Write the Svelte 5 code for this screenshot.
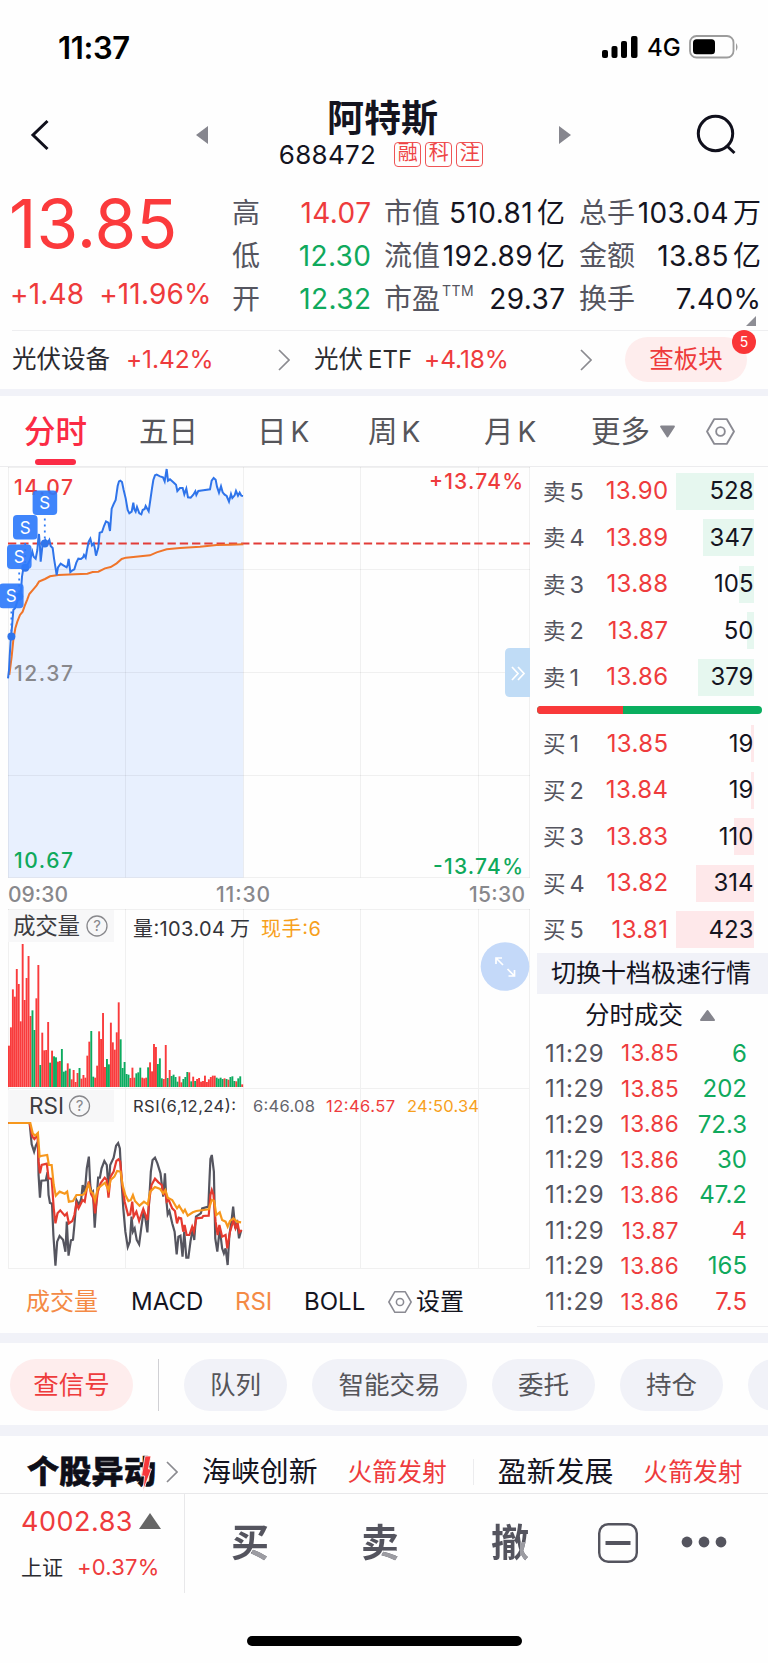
<script>
	const stats = [
		[
			{ label: '高', value: '14.07', tone: 'up' },
			{ label: '低', value: '12.30', tone: 'down' },
			{ label: '开', value: '12.32', tone: 'down' }
		],
		[
			{ label: '市值', value: '510.81', unit: '亿' },
			{ label: '流值', value: '192.89', unit: '亿' },
			{ label: '市盈', sup: 'TTM', value: '29.37' }
		],
		[
			{ label: '总手', value: '103.04', unit: '万' },
			{ label: '金额', value: '13.85', unit: '亿' },
			{ label: '换手', value: '7.40%' }
		]
	];

	const sells = [
		{ name: '卖', level: 5, price: '13.90', volume: 528, bar: 78 },
		{ name: '卖', level: 4, price: '13.89', volume: 347, bar: 51 },
		{ name: '卖', level: 3, price: '13.88', volume: 105, bar: 15 },
		{ name: '卖', level: 2, price: '13.87', volume: 50, bar: 7 },
		{ name: '卖', level: 1, price: '13.86', volume: 379, bar: 56 }
	];

	const buys = [
		{ name: '买', level: 1, price: '13.85', volume: 19, bar: 3 },
		{ name: '买', level: 2, price: '13.84', volume: 19, bar: 3 },
		{ name: '买', level: 3, price: '13.83', volume: 110, bar: 20 },
		{ name: '买', level: 4, price: '13.82', volume: 314, bar: 58 },
		{ name: '买', level: 5, price: '13.81', volume: 423, bar: 78 }
	];

	const trades = [
		{ price: '13.85', volume: '6', tone: 'down' },
		{ price: '13.85', volume: '202', tone: 'down' },
		{ price: '13.86', volume: '72.3', tone: 'down' },
		{ price: '13.86', volume: '30', tone: 'down' },
		{ price: '13.86', volume: '47.2', tone: 'down' },
		{ price: '13.87', volume: '4', tone: 'up' },
		{ price: '13.86', volume: '165', tone: 'down' },
		{ price: '13.86', volume: '7.5', tone: 'up' }
	];

	const gridX = [8.5, 125.5, 243.5, 360.5, 478.5, 529.5];

	// intraday series, three units per pixel
	const priceLine =
		'24,655 27,630 29,590 32,540 36,500 40,450 45,445 50,430 55,415 62,405 66,350 70,325 76,322 84,312 90,300 97,275 101,290 107,296 112,270 115,235 117,222 120,262 122,305 127,260 130,250 136,240 142,250 148,240 152,258 158,264 162,295 166,320 170,345 174,322 182,311 190,316 200,322 203,315 206,297 211,336 216,332 223,328 229,308 235,296 243,297 249,292 252,285 257,293 261,270 266,245 271,236 276,256 281,250 284,262 288,287 295,262 299,218 306,216 312,198 318,184 325,188 330,213 335,146 341,132 347,120 353,78 357,64 361,62 366,66 371,90 377,115 383,150 388,160 395,155 400,128 403,148 407,155 411,141 418,160 424,163 428,150 434,147 437,138 446,154 451,120 456,85 460,60 465,46 470,44 480,49 489,52 494,64 500,27 504,62 510,58 520,67 528,74 532,93 540,84 548,84 553,103 559,86 564,112 572,113 580,104 586,94 589,105 595,93 610,91 630,88 635,62 641,54 647,59 651,80 657,98 663,79 668,97 674,104 680,108 687,125 693,102 697,114 704,106 708,93 714,107 719,98 724,107 729,108';
	const averageLine =
		'28,645 35,590 40,540 46,505 52,485 60,465 68,455 75,435 82,418 88,402 100,388 110,376 117,365 135,357 150,349 175,345 225,343 262,341 278,336 295,335 315,325 332,321 350,310 365,297 378,293 400,291 450,286 470,277 500,268 540,264 600,260 650,255 690,254 730,253';

	const rsi6 =
		'24,114 86,114 92,178 99,200 104,182 110,170 112,270 116,338 120,287 133,286 138,262 141,330 145,354 151,356 155,450 161,542 166,470 173,453 183,464 190,500 194,410 199,512 206,466 212,464 216,420 222,345 230,360 236,340 240,300 246,325 252,250 258,215 262,300 266,325 270,320 275,428 280,350 285,278 290,278 295,250 303,228 310,240 315,310 320,240 330,218 337,182 343,174 348,190 353,290 358,370 364,440 371,486 377,470 382,395 386,440 391,430 397,465 404,478 410,430 416,385 422,400 428,442 433,350 438,260 443,225 450,218 457,235 466,265 474,335 479,265 483,345 487,388 492,378 500,415 507,440 513,508 518,455 524,452 530,515 535,440 541,518 547,518 553,470 560,430 564,465 569,395 583,385 587,370 605,365 608,290 611,222 615,210 621,260 625,460 631,500 638,430 645,490 650,505 655,490 661,540 666,450 672,410 677,365 683,430 689,415 694,460 700,437';
	const rsi12 =
		'24,114 86,114 94,155 100,162 109,150 112,230 116,265 121,240 136,236 141,280 150,282 156,370 161,415 167,385 175,376 188,392 194,385 200,415 210,408 216,390 222,355 228,370 240,345 246,350 252,310 258,290 264,325 271,340 276,385 284,320 292,295 304,278 310,285 315,338 321,275 330,260 338,228 344,223 349,230 355,300 362,350 372,390 378,388 384,350 388,395 396,380 404,408 416,372 428,405 434,340 440,300 450,281 460,292 470,300 475,330 480,315 484,350 490,345 500,370 508,378 514,415 519,398 526,400 532,440 536,420 542,450 550,450 558,425 563,440 570,400 587,398 590,393 606,392 611,330 615,315 620,330 626,410 632,450 637,420 645,455 655,450 660,490 668,440 678,405 684,430 690,415 695,442 702,435';
	const rsi24 =
		'24,114 88,114 95,145 102,152 110,144 115,215 119,213 137,210 142,240 150,240 156,300 162,332 173,320 188,326 195,320 200,350 212,348 222,330 240,330 246,325 257,298 264,320 270,325 276,346 284,310 305,293 315,315 321,285 332,275 340,258 350,260 356,300 364,330 373,348 380,345 386,330 392,348 405,362 418,350 429,358 436,320 450,306 465,312 474,325 480,315 487,338 500,345 514,370 520,362 532,382 537,374 545,392 560,382 570,378 606,373 615,345 622,348 628,390 638,382 645,405 655,410 661,425 668,408 678,400 688,410 700,412';

	const marks = [
		{ x: 11.4, dot: 169.6, box: 116.6, left: -1 },
		{ x: 19.2, dot: 129.6, box: 77.4, left: 7 },
		{ x: 25.2, dot: 100.8, box: 48, left: 13 },
		{ x: 44.8, dot: 76.4, box: 23.4, left: 32.6 }
	];

	// one bar per minute; a leading minus marks a falling minute
	const volumes = [
		124, 179, 293, 271, 354, 309, 197, 429, 261, 327, 393, 213, -230, -171, 266, 366, -66, 163, 110, 111,
		195, -73, 109, -92, -89, 76, 78, -114, -46, -49, 71, -55, 23, 51, 15, 42, -57, 25, 36, 28,
		94, 136, -168, -31, 28, 64, 167, 144, 222, 60, -84, -68, 193, 134, 112, 164, 254, -143, -57, -75,
		-39, -37, 27, 58, 28, -41, -44, -58, 28, 26, 28, -59, 74, 47, 129, 120, -69, -86, -26, 24,
		126, -27, 51, -33, -37, -30, -16, 32, 14, -24, -30, -45, 44, -17, 31, -18, 24, 27, 16, 18,
		34, 15, 23, 30, 34, 34, -28, -25, -28, -24, 26, -24, 22, -30, -32, -18, 17, -26, -32, 8
	];
</script>

{#snippet hexagon(size)}
	<svg class="hexagon" width={size} height={size} viewBox="0 0 28 28">
		<path d="M8 2h12l7 12-7 12H8L1 14z" />
		<circle cx="14" cy="14" r="4.2" />
	</svg>
{/snippet}

{#snippet chevron()}
	<svg class="chevron" width="12" height="22" viewBox="0 0 12 22"><path d="M1 1l10 10L1 21" /></svg>
{/snippet}

{#snippet bookRow(row, side)}
	<div class="book-row">
		<span class="book-name">{row.name}<i>{row.level}</i></span>
		<span class="book-price up">{row.price}</span>
		<span class="book-volume">
			<span class="book-bar {side}" style="width: {row.bar}px"></span>
			<b>{row.volume}</b>
		</span>
	</div>
{/snippet}

{#snippet help(x, y)}
	<circle cx={x} cy={y} r="10" class="help-ring" />
	<text {x} y={y + 5.4} class="help-mark" text-anchor="middle">?</text>
{/snippet}

<main class="screen">
	<div class="status">
		<span class="clock">11:37</span>
		<svg width="36" height="22" viewBox="0 0 36 22">
			<rect x="0" y="14" width="6" height="8" rx="2" />
			<rect x="9.5" y="10" width="6" height="12" rx="2" />
			<rect x="19" y="5" width="6" height="17" rx="2" />
			<rect x="29" y="0" width="6.5" height="22" rx="2" />
		</svg>
		<span class="network">4G</span>
		<svg width="51" height="24" viewBox="0 0 51 24">
			<rect x="1" y="1" width="43.5" height="21.5" rx="6.5" fill="none" stroke="#9c9c9c" stroke-width="1.8" />
			<rect x="4" y="4.2" width="22" height="15" rx="3.5" />
			<path d="M47 8q3 4-0 8z" fill="#9c9c9c" />
		</svg>
	</div>

	<header class="header">
		<svg class="back" width="20" height="32" viewBox="0 0 20 32"><path d="M17.5 2L3 16l14.5 14" /></svg>
		<svg class="prev" width="14" height="20" viewBox="0 0 14 20"><path d="M13 1v18L1 10z" /></svg>
		<div class="title">
			<h1>阿特斯</h1>
			<div class="code">
				<span>688472</span>
				<em>融</em><em>科</em><em>注</em>
			</div>
		</div>
		<svg class="next" width="14" height="20" viewBox="0 0 14 20"><path d="M1 1v18l12-9z" /></svg>
		<svg class="search" width="42" height="42" viewBox="0 0 42 42">
			<circle cx="19.5" cy="19.5" r="17.2" />
			<path d="M31 32l7.500 7" />
		</svg>
	</header>

	<section class="quote">
		<div class="last up">
			<strong>13.85</strong>
			<p><span>+1.48</span><span>+11.96%</span></p>
		</div>
		{#each stats as column}
			<dl>
				{#each column as item}
					<div>
						<dt>{item.label}{#if item.sup}<sup>{item.sup}</sup>{/if}</dt>
						<dd class={item.tone}>{item.value}{#if item.unit}<i>{item.unit}</i>{/if}</dd>
					</div>
				{/each}
			</dl>
		{/each}
		<svg class="corner" width="10" height="10" viewBox="0 0 10 10"><path d="M10 0v10H0z" /></svg>
	</section>

	<section class="sectors">
		<div class="sector"><span>光伏设备</span><span class="up">+1.42%</span>{@render chevron()}</div>
		<div class="sector fund"><span>光伏<i>ETF</i></span><span class="up">+4.18%</span>{@render chevron()}</div>
		<button type="button" class="sector-button">查板块<b>5</b></button>
	</section>

	<nav class="periods">
		<span class="active">分时</span>
		<span>五日</span>
		<span>日<i>K</i></span>
		<span>周<i>K</i></span>
		<span>月<i>K</i></span>
		<span>更多</span>
		<svg class="caret" width="17" height="13" viewBox="0 0 17 13"><path d="M2 1.5h13l-6.500 10z" /></svg>
		{@render hexagon(29)}
	</nav>

	<section class="market">
		<div class="charts">
			<svg class="price-chart" width="530" height="442" viewBox="0 0 530 442">
				<g transform="translate(0 -7) scale(.33333)">
					<polygon class="area" points="{priceLine} 730,1253 24,1253" />
				</g>
				<g class="grid">
					{#each gridX as x}<path d="M{x} 0V410.5" />{/each}
					{#each [0.5, 102.5, 205.5, 308.5, 410.5] as y}<path d="M8 {y}H530" />{/each}
				</g>
				<text class="axis up" x="14" y="28" textLength="59">14.07</text>
				<path class="last-line" d="M8 76.5H530" />
				<g transform="translate(0 -7) scale(.33333)">
					<polyline class="average" points={averageLine} />
					<polyline class="price" points={priceLine} />
				</g>
				{#each marks as mark}
					<path class="mark-line" d="M{mark.x} {mark.box + 28}V{mark.dot}" />
					<circle class="mark-dot" cx={mark.x} cy={mark.dot} r="4" />
				{/each}
				{#each marks as mark}
					<rect class="mark-box" x={mark.left} y={mark.box} width="24.6" height="24.6" rx="4" />
					<text class="mark-text" x={mark.left + 12.2} y={mark.box + 18.6} text-anchor="middle">S</text>
				{/each}
				<text class="axis muted" x="14" y="214" textLength="59">12.37</text>
				<text class="axis down" x="14" y="400.5" textLength="59">10.67</text>
				<text class="axis up" x="429" y="22" textLength="94">+13.74%</text>
				<text class="axis down" x="433" y="407" textLength="90">-13.74%</text>
				<text class="axis muted" x="8" y="435" textLength="60">09:30</text>
				<text class="axis muted" x="216" y="435" textLength="54">11:30</text>
				<text class="axis muted" x="469" y="435" textLength="56">15:30</text>
				<path class="handle" d="M530 181h-20q-5 0-5 5v39q0 5 5 5h20z" />
				<path class="handle-arrow" d="M512 200l6 6.5-6 6.5M518 200l6 6.5-6 6.5" />
			</svg>

			<svg class="volume-chart" width="530" height="180" viewBox="0 0 530 180">
				<g class="grid">
					{#each gridX as x}<path d="M{x} 0V179" />{/each}
					<path d="M8 .5H530M8 179.5H530" />
				</g>
				<rect class="tag" x="8" y="1" width="106" height="32" />
				<text class="name" x="13" y="24.5" textLength="67">成交量</text>
				{@render help(97, 17)}
				<text class="info" x="133" y="26.5" textLength="92">量:103.04</text>
				<text class="info" x="230" y="26.5">万</text>
				<text class="info orange" x="261" y="26.5" textLength="60">现手:6</text>
				{#each volumes as volume, i}
					<rect
						class={volume < 0 ? 'fall' : 'rise'}
						x={8 + i * 1.96}
						y={178 - Math.abs(volume) / 3}
						width="1.9"
						height={Math.abs(volume) / 3}
					/>
				{/each}
				<circle class="expand" cx="505" cy="57.5" r="24.3" />
				<path class="expand-arrow" d="M503 56l-7-7M496 55v-6h6M507.5 60l7 7M514.5 61v6h-6" />
			</svg>

			<svg class="rsi-chart" width="530" height="180" viewBox="0 0 530 180">
				<g class="grid">
					{#each gridX as x}<path d="M{x} 0V179" />{/each}
					<path d="M8 179.5H530" />
				</g>
				<rect class="tag" x="8" y="1" width="106" height="32" />
				<text class="name" x="29" y="24.5" textLength="35">RSI</text>
				{@render help(79.5, 17)}
				<text class="small" x="133" y="23" textLength="103">RSI(6,12,24):</text>
				<text class="small slate" x="253" y="23" textLength="62">6:46.08</text>
				<text class="small up" x="326" y="23" textLength="69">12:46.57</text>
				<text class="small orange" x="407" y="23" textLength="72">24:50.34</text>
				<g transform="translate(0 -4) scale(.3444 .33333)">
					<polyline class="rsi slate" points={rsi6} />
					<polyline class="rsi red" points={rsi12} />
					<polyline class="rsi gold" points={rsi24} />
				</g>
			</svg>

			<nav class="indicators">
				<span class="on">成交量</span>
				<span>MACD</span>
				<span class="on">RSI</span>
				<span>BOLL</span>
				<span class="settings">{@render hexagon(24)}设置</span>
			</nav>
		</div>

		<aside class="depth">
			{#each sells as row}{@render bookRow(row, 'sell')}{/each}
			<div class="ratio"><span></span></div>
			{#each buys as row}{@render bookRow(row, 'buy')}{/each}
			<div class="switch">切换十档极速行情</div>
			<div class="trades-title">
				分时成交
				<svg width="17" height="13" viewBox="0 0 17 13"><path d="M2 11l6.500-9L15 11z" /></svg>
			</div>
			{#each trades as trade}
				<div class="trade">
					<span class="trade-time">11:29</span>
					<span class="trade-price up">{trade.price}</span>
					<span class="trade-volume {trade.tone}">{trade.volume}</span>
				</div>
			{/each}
		</aside>
	</section>

	<nav class="actions">
		<span class="signal">查信号</span>
		<i></i>
		<span>队列</span>
		<span class="wide">智能交易</span>
		<span>委托</span>
		<span>持仓</span>
		<span></span>
	</nav>

	<section class="news">
		<div class="logo">
			个股异动
			<svg width="11" height="35" viewBox="0 0 11 35"><path d="M4 0h6L7.500 13h3L2 35l1.500-15H.5z" /></svg>
		</div>
		{@render chevron()}
		<span class="stock">海峡创新</span>
		<span class="event">火箭发射</span>
		<i></i>
		<span class="stock">盈新发展</span>
		<span class="event">火箭发射</span>
	</section>

	<footer class="bottom">
		<div class="index">
			<p class="up">4002.83<svg width="22" height="17" viewBox="0 0 22 17"><path d="M11 0l11 16H0z" /></svg></p>
			<p class="index-name">上证<span class="up">+0.37%</span></p>
		</div>
		<b>买</b>
		<b>卖</b>
		<b class="cancel">撤</b>
		<svg class="minus" width="40" height="40" viewBox="0 0 40 40">
			<rect x="1.2" y="1.2" width="37.6" height="37.6" rx="9" />
			<path d="M7.5 20h25" />
		</svg>
		<svg class="dots" width="46" height="12" viewBox="0 0 46 12">
			<circle cx="6" cy="6" r="5.4" /><circle cx="23" cy="6" r="5.4" /><circle cx="40" cy="6" r="5.4" />
		</svg>
	</footer>
	<div class="home"></div>
</main>

<style>
	:global(body) {
		background: #fefefe;
	}

	.screen {
		width: 768px;
		height: 1663px;
		overflow: hidden;
		background: #fefefe;
		color: #14141f;
		font-family: Inter, "Noto Sans CJK SC", sans-serif;
		line-height: 1;
		white-space: nowrap;
	}

	.screen * {
		box-sizing: border-box;
	}

	i,
	em {
		font-style: normal;
	}

	p,
	h1,
	dl,
	dd {
		margin: 0;
	}

	.up {
		color: #ee3b3c;
		fill: #ee3b3c;
	}

	.down {
		color: #0fa95c;
		fill: #0fa95c;
	}

	.status {
		display: flex;
		align-items: center;
		height: 94px;
		padding: 0 28px 0 58px;
		color: #000;
	}

	.clock {
		flex: 1;
		padding-top: 1px;
		font-size: 31px;
		font-weight: 600;
		letter-spacing: -0.4px;
	}

	.network {
		width: 34px;
		margin: 2px 8px 0 9px;
		font-size: 24px;
		font-weight: 500;
		letter-spacing: 0;
	}

	.header {
		display: flex;
		align-items: center;
		height: 82px;
		padding: 0 30px;
		fill: #86868e;
	}

	.back,
	.search {
		fill: none;
		stroke: #10101c;
		stroke-width: 3;
	}

	.prev {
		margin-left: 145px;
	}

	.title {
		flex: 1;
		display: flex;
		flex-direction: column;
		align-items: center;
		margin-left: -2px;
	}

	.next {
		margin-right: 124px;
	}

	h1 {
		margin-top: -4px;
		font-size: 37px;
		font-weight: 600;
		line-height: 40px;
	}

	.code {
		display: flex;
		align-items: center;
		margin: 3px 3px 0 0;
		font-size: 26px;
	}

	.code span {
		margin-right: 18px;
		letter-spacing: 0.3px;
	}

	.code em {
		width: 27px;
		height: 25px;
		margin-right: 4px;
		border: 1.5px solid #ef5556;
		border-radius: 4px;
		color: #ee4546;
		font-size: 20px;
		line-height: 21px;
		text-align: center;
	}

	.code em:last-child {
		margin-right: 0;
	}

	.quote {
		position: relative;
		display: grid;
		grid-template-columns: 220px 139px 180px 179px;
		justify-content: start;
		height: 154px;
		padding: 15px 0 0 12px;
	}

	.quote dl:nth-of-type(2) {
		margin-left: 13px;
		margin-right: -14px;
	}

	.quote dl:nth-of-type(3) {
		margin-left: 28px;
		margin-right: -31px;
	}

	.last {
		margin-left: -2px;
	}

	.last strong {
		display: block;
		height: 66px;
		margin-left: -1px;
		font-size: 67.5px;
		font-weight: 400;
		line-height: 66px;
		letter-spacing: 0;
		color: #fb3a3c;
	}

	.last p {
		display: flex;
		gap: 15px;
		margin-top: 23px;
		font-size: 28px;
		letter-spacing: 0.15px;
	}

	dl div {
		display: flex;
		justify-content: space-between;
		align-items: center;
		height: 43px;
		font-size: 28px;
	}

	dt {
		display: flex;
		color: #55555f;
	}

	dd {
		letter-spacing: 0.4px;
		margin-right: -0.4px;
	}

	sup {
		margin: -1px 0 0 2px;
		font-size: 14px;
		line-height: 1;
		letter-spacing: 0.5px;
		vertical-align: top;
	}

	dd i {
		margin-left: 4px;
	}

	.corner {
		position: absolute;
		right: 12px;
		bottom: 4px;
		fill: #8d8d94;
	}

	.sectors {
		display: flex;
		align-items: center;
		height: 59px;
		margin-left: 12px;
		border-top: 1px solid #eeeef0;
		font-size: 24.5px;
		color: #2b2b30;
	}

	.sector {
		display: flex;
		align-items: center;
		width: 302px;
		margin-top: -1px;
	}

	.sector .up {
		margin-left: 16px;
		letter-spacing: -0.1px;
	}

	.sector i {
		margin-left: 5px;
		font-size: 24px;
	}

	.fund .up {
		margin-left: 12px;
	}

	.sector .chevron {
		margin-left: auto;
		margin-right: 24px;
	}

	.chevron {
		fill: none;
		stroke: #8b8b90;
		stroke-width: 1.7;
	}

	.sector-button {
		position: relative;
		width: 122px;
		height: 45px;
		margin: -2px 0 0 9px;
		padding: 0 0 3px;
		border: 0;
		border-radius: 23px;
		background: #feeded;
		color: #ee3b3c;
		font: 24.5px Inter, "Noto Sans CJK SC", sans-serif;
	}

	.sector-button b {
		position: absolute;
		top: -7px;
		right: -9px;
		width: 24px;
		height: 24px;
		border-radius: 50%;
		background: #fa3537;
		color: #fff;
		font-size: 14px;
		font-weight: 400;
		line-height: 24px;
	}

	.periods {
		display: grid;
		grid-template-columns: 115px 118px 111px 116px 107px 68px 47px 32px;
		align-items: center;
		height: 78px;
		padding: 1px 0 0 24px;
		border-top: 7px solid #f1f2f8;
		border-bottom: 1px solid #ececee;
		color: #55555a;
		font-size: 29.5px;
	}

	.periods i {
		margin-left: 4px;
		font-size: 28px;
	}

	.periods .active {
		position: relative;
		color: #fb2b45;
		font-size: 31.5px;
		font-weight: 500;
	}

	.periods .active::after {
		content: '';
		position: absolute;
		left: 11px;
		bottom: -18px;
		width: 41px;
		height: 6px;
		border-radius: 3px;
		background: #fb2b45;
	}

	.caret {
		fill: #85858d;
		stroke: #85858d;
		stroke-width: 1.8;
		stroke-linejoin: round;
	}

	.hexagon {
		fill: none;
		stroke: #8a8a92;
		stroke-width: 1.8;
		stroke-linejoin: round;
	}

	.market {
		display: flex;
		height: 866px;
	}

	.charts {
		width: 530px;
	}

	.charts > svg {
		display: block;
	}

	.charts text {
		font-family: Inter, "Noto Sans CJK SC", sans-serif;
	}

	.grid path {
		fill: none;
		stroke: #000;
		stroke-opacity: 0.055;
	}

	.area {
		fill: #e8f0fe;
	}

	.price {
		fill: none;
		stroke: #2f74ea;
		stroke-width: 6;
	}

	.average {
		fill: none;
		stroke: #f0752a;
		stroke-width: 6;
	}

	.last-line {
		stroke: #e23c38;
		stroke-width: 2.2;
		stroke-dasharray: 8.3 3.97;
	}

	.axis {
		font-size: 21px;
		font-weight: 500;
	}

	.muted {
		fill: #88888c;
	}

	.mark-line {
		stroke: #2f7bf5;
		stroke-width: 1.8;
		stroke-dasharray: 2 4;
	}

	.mark-dot {
		fill: #2f74ea;
	}

	.mark-box {
		fill: #2f7bfb;
		fill-opacity: 0.92;
	}

	.mark-text {
		fill: #fff;
		font-size: 17px;
	}

	.handle {
		fill: #c0dcf6;
	}

	.handle-arrow,
	.expand-arrow {
		fill: none;
		stroke: #fff;
		stroke-width: 1.7;
	}

	.expand {
		fill: #c4d9f9;
	}

	.tag {
		fill: #f7f7f8;
	}

	.name {
		fill: #3c3c40;
		font-size: 22.5px;
	}

	.info {
		fill: #333338;
		font-size: 20px;
	}

	.small {
		fill: #333338;
		font-size: 16.5px;
	}

	.small.up {
		fill: #ee3b3c;
	}

	.small.slate {
		fill: #65656d;
	}

	.orange,
	.small.orange {
		fill: #f7a01c;
	}

	.help-ring {
		fill: none;
		stroke: #88888c;
		stroke-width: 1.3;
	}

	.help-mark {
		fill: #88888c;
		font-size: 15px;
	}

	.rise {
		fill: #f93b3c;
	}

	.fall {
		fill: #0cab5f;
	}

	.rsi {
		fill: none;
		stroke-width: 2.2;
		vector-effect: non-scaling-stroke;
	}

	.rsi.slate {
		stroke: #55555f;
	}

	.rsi.red {
		stroke: #e53a2f;
	}

	.rsi.gold {
		stroke: #f7981d;
	}

	.indicators {
		display: grid;
		grid-template-columns: 105px 104px 69px 84px auto;
		justify-content: start;
		align-items: center;
		height: 66px;
		padding-left: 26px;
		font-size: 24px;
	}

	.indicators .on {
		color: #f48a45;
	}

	.settings {
		display: flex;
		align-items: center;
		gap: 4px;
	}

	.depth {
		width: 231px;
		height: 860px;
		margin-left: 7px;
		padding-top: 1px;
		border-bottom: 1px solid #eeeef0;
	}

	.book-row {
		display: grid;
		grid-template-columns: 50px 75.5px 85px;
		align-items: center;
		height: 46.5px;
		padding-left: 6px;
		font-size: 24px;
	}

	.book-name {
		color: #55555f;
		font-size: 22.5px;
	}

	.book-name i {
		margin-left: 4px;
		font-size: 23.5px;
	}

	.book-price {
		letter-spacing: 0.4px;
		text-align: right;
	}

	.book-volume {
		position: relative;
		display: flex;
		justify-content: flex-end;
		align-items: center;
		height: 37px;
	}

	.book-volume b {
		position: relative;
		font-weight: 400;
	}

	.book-bar {
		position: absolute;
		right: 0;
		height: 37px;
	}

	.sell {
		background: #e6f7ef;
	}

	.buy {
		background: #fee8ea;
	}

	.ratio {
		display: flex;
		height: 8px;
		margin: 5.5px 6px 6.5px 0;
		border-radius: 4px;
		background: #0aae5f;
		overflow: hidden;
	}

	.ratio span {
		width: 86px;
		background: #f9393a;
	}

	.switch {
		height: 41px;
		background: #f1f2f8;
		font-size: 25px;
		line-height: 41px;
		padding-left: 14px;
	}

	.trades-title {
		display: flex;
		align-items: center;
		gap: 16px;
		height: 42px;
		padding-left: 48px;
		font-size: 24.5px;
	}

	.trades-title svg {
		fill: #85858d;
		stroke: #85858d;
		stroke-width: 2;
		stroke-linejoin: round;
	}

	.trade {
		display: grid;
		grid-template-columns: 74px 60px 68px;
		align-items: center;
		height: 35.45px;
		padding-left: 8px;
		color: #55555f;
		font-size: 24px;
	}

	.trade-time {
		letter-spacing: 0.7px;
	}

	.trade-price {
		font-size: 22.5px;
		letter-spacing: 0.4px;
		text-align: right;
	}

	.trade-volume {
		text-align: right;
	}

	.actions {
		display: flex;
		gap: 25px;
		height: 103px;
		padding: 16px 0 0 10px;
		border: solid #f1f2f8;
		border-width: 10px 0 11px;
		overflow: hidden;
	}

	.actions span {
		flex: none;
		width: 103px;
		height: 52px;
		border-radius: 26px;
		background: #f1f2f8;
		color: #55555a;
		font-size: 25.5px;
		line-height: 51px;
		text-align: center;
	}

	.actions .signal {
		width: 123px;
		background: #feeded;
		color: #ee3b3c;
	}

	.actions .wide {
		width: 155px;
	}

	.actions i {
		flex: none;
		width: 1px;
		height: 52px;
		background: #d0d0d4;
	}

	.news {
		display: flex;
		align-items: center;
		height: 58px;
		padding: 15px 0 0 27px;
		border-bottom: 1px solid #e8e8ea;
		overflow: hidden;
	}

	.logo {
		position: relative;
		width: 139px;
		color: #0e0e18;
		font-size: 32px;
		font-weight: 900;
		letter-spacing: 0.3px;
		-webkit-text-stroke: 0.6px #0e0e18;
	}

	.logo svg {
		position: absolute;
		left: 114px;
		top: 0;
		fill: #f8393a;
		stroke: #fff;
		stroke-width: 0.8;
		overflow: visible;
	}

	.stock {
		margin-left: 24px;
		font-size: 28.9px;
	}

	.event {
		margin-left: 30px;
		color: #ee3b3c;
		font-size: 24.8px;
	}

	.news i {
		width: 1px;
		height: 26px;
		margin-left: 26px;
		background: #ececee;
	}

	.bottom {
		display: flex;
		align-items: center;
		height: 99px;
	}

	.index {
		width: 185px;
		height: 99px;
		padding: 14px 0 0 21px;
		border-right: 1px solid #e8e8ea;
	}

	.index p {
		display: flex;
		align-items: center;
		font-size: 27px;
		letter-spacing: 0.5px;
	}

	.index svg {
		margin-left: 6px;
		fill: #666;
	}

	.index .index-name {
		margin-top: 21px;
		font-size: 21px;
		letter-spacing: 0;
		color: #2b2b30;
	}

	.index-name span {
		margin-left: 14px;
		font-size: 22px;
		letter-spacing: 0.2px;
	}

	.bottom b {
		width: 38px;
		margin: -3px 0 0 46px;
		background: linear-gradient(#9c9ca2, #9c9ca2) 100% 90% / 17px 11px no-repeat, #54545e;
		-webkit-background-clip: text;
		background-clip: text;
		color: transparent;
		font-size: 38px;
		font-weight: 700;
		line-height: 44px;
	}

	.bottom b + b {
		margin-left: 92px;
	}

	.bottom .cancel {
		background: linear-gradient(#9c9ca2, #9c9ca2) 100% 90% / 9px 20px no-repeat, #54545e;
		-webkit-background-clip: text;
		background-clip: text;
	}

	.minus {
		margin: -2px 0 0 69px;
		fill: none;
		stroke: #54545e;
		stroke-width: 2.4;
	}

	.minus path {
		stroke-width: 4;
	}

	.dots {
		margin: -3px 0 0 43px;
		fill: #54545e;
	}

	.home {
		width: 275px;
		height: 10px;
		margin: 43px 0 0 247px;
		border-radius: 5px;
		background: #000;
	}
</style>
